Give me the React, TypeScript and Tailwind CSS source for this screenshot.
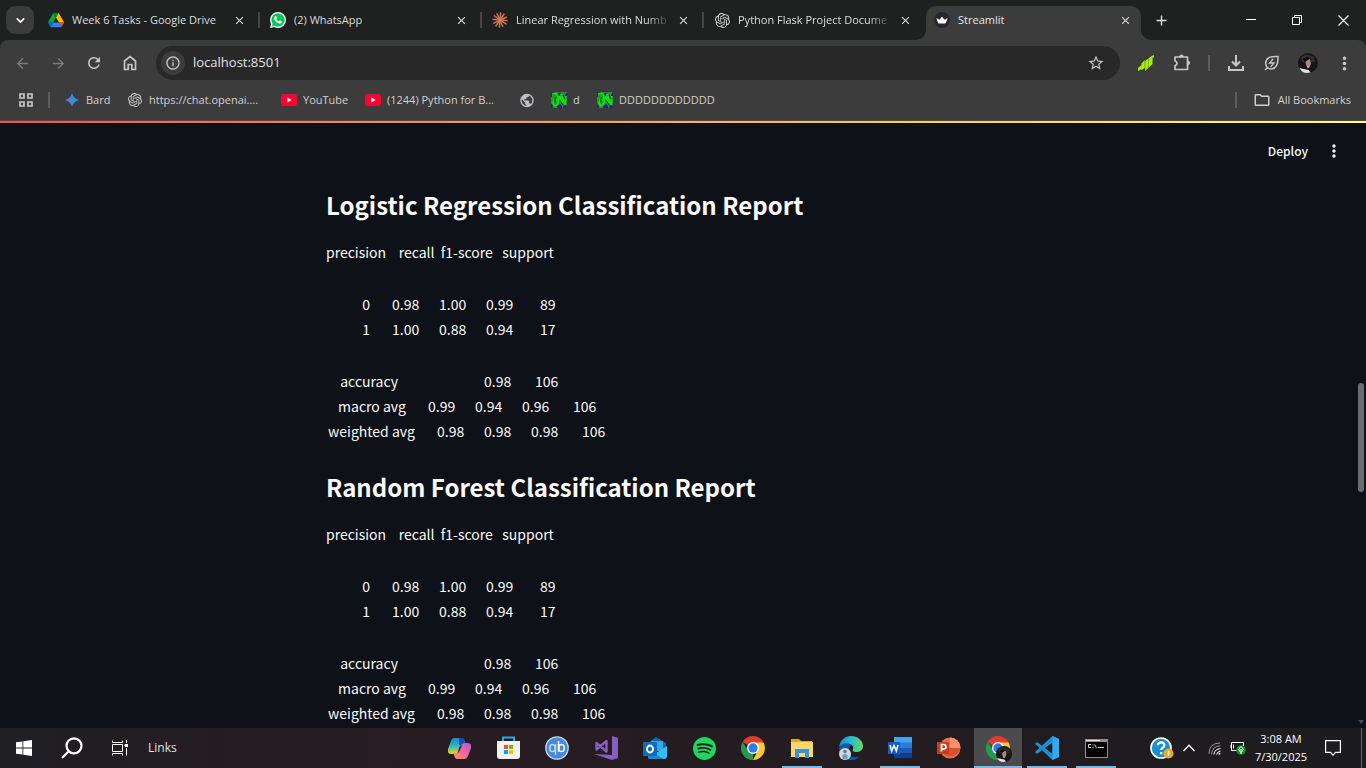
import React from "react";
import {
  MdArrowBack, MdArrowForward, MdRefresh, MdStarBorder, MdInfoOutline,
  MdMoreVert, MdPublic, MdClose, MdAdd, MdOutlineFolder,
} from "react-icons/md";
import { SiOpenai, SiSpotify } from "react-icons/si";
import { ChevronDown } from "lucide-react";

const UI = "font-['Open_Sans','Noto_Sans',sans-serif]";
const PAGE = "font-['Noto_Sans_CJK_SC','Noto_Sans',sans-serif]";

/* ---------- brand marks ---------- */

function DriveLogo() {
  return (
    <svg width="16" height="16" viewBox="0 0 87.3 87.3" aria-hidden="true">
      <path d="M6.6 71.4l3.85 6.65c.8 1.4 1.95 2.5 3.3 3.3L27.5 57.55H0c0 1.55.4 3.1 1.2 4.5z" fill="#0066da" />
      <path d="M43.65 29.6L29.9 5.8c-1.35.8-2.5 1.9-3.3 3.3L1.2 53.05A9 9 0 0 0 0 57.55h27.5z" fill="#00ac47" />
      <path d="M73.55 81.35c1.35-.8 2.5-1.9 3.3-3.3l1.6-2.75 7.65-13.25c.8-1.4 1.2-2.95 1.2-4.5H59.8l5.85 11.5z" fill="#ea4335" />
      <path d="M43.65 29.6L57.4 5.8c-1.35-.8-2.9-1.2-4.5-1.2H34.4c-1.6 0-3.15.45-4.5 1.2z" fill="#00832d" />
      <path d="M59.8 57.55H27.5L13.75 81.35c1.35.8 2.9 1.2 4.5 1.2h50.8c1.6 0 3.15-.45 4.5-1.2z" fill="#2684fc" />
      <path d="M73.4 31.1L60.7 9.1c-.8-1.4-1.95-2.5-3.3-3.3L43.65 29.6l16.15 28h27.45c0-1.55-.4-3.1-1.2-4.5z" fill="#ffba00" />
    </svg>
  );
}

function WhatsAppLogo() {
  return (
    <svg width="16" height="16" viewBox="0 0 16 16" aria-hidden="true">
      <path d="M8 0a8 8 0 0 1 0 16c-1.400 0-2.600-.3-3.800-1L0 16l1.100-4A8 8 0 0 1 8 0z" fill="#fff" />
      <path d="M8 1.300a6.700 6.700 0 1 1-3.500 12.400l-2.700.7.8-2.600A6.700 6.700 0 0 1 8 1.300z" fill="#06c755" />
      <path d="M5.400 4.200c.5-.3.8 0 1 .4l.5 1.200c.1.500-.6.9-.6 1.200.6 1.300 1.500 2 2.700 2.500.4 0 .7-.9 1.100-.9l1.500.8c.3.200.2.900-.1 1.300-.7.900-1.900 1-3 .6-2-.7-3.500-2.100-4.300-4-.4-1.200.2-2.500 1.200-3.100z" fill="#fff" />
    </svg>
  );
}

function ClaudeLogo() {
  const rays = [0, 28, 62, 90, 120, 148, 180, 212, 240, 270, 300, 332];
  return (
    <svg width="16" height="16" viewBox="0 0 16 16" aria-hidden="true">
      <g stroke="#d97757" strokeWidth="1.400" strokeLinecap="round">
        {rays.map((r) => <line key={r} x1="8" y1="8" x2="15" y2="8" transform={`rotate(${r + 5} 8 8)`} />)}
      </g>
    </svg>
  );
}

function StreamlitMark() {
  return (
    <svg width="16" height="16" viewBox="0 0 16 16" aria-hidden="true">
      <circle cx="8" cy="8" r="8" fill="#262730" />
      <path d="M2.300 6l3 1.700L8 4.800l2.700 2.900 3-1.700-1.900 5.200q-3.800.8-7.600 0z" fill="#fff" />
    </svg>
  );
}

function BardMark() {
  return (
    <svg width="14" height="14" viewBox="0 0 14 14" aria-hidden="true">
      <defs>
        <linearGradient id="bard" x1="0" x2="1">
          <stop offset="0" stopColor="#9168c0" /><stop offset=".45" stopColor="#4285d8" /><stop offset="1" stopColor="#1ba1e3" />
        </linearGradient>
      </defs>
      <path d="M7 0Q8.500 5.500 14 7Q8.500 8.500 7 14Q5.500 8.500 0 7Q5.500 5.500 7 0z" fill="url(#bard)" />
    </svg>
  );
}

function YouTubeMark() {
  return (
    <svg width="16" height="12" viewBox="0 0 16 12" aria-hidden="true">
      <rect width="16" height="12" rx="3" fill="#ff0033" />
      <path d="M6.300 3.500v5L10.600 6z" fill="#fff" />
    </svg>
  );
}

function GreenTile() {
  return (
    <svg width="16" height="16" viewBox="0 0 16 16" aria-hidden="true">
      <rect width="16" height="16" fill="#1d9a22" />
      <path d="M0 0h4v2H1v3H0zM9 0l2 4-2 1-2-3zM14 3l2-3v6l-1 2zM0 11l2 3v2H0zM6 14l3-2 2 2v2H6zM13 12l3 2v2h-4z" fill="#4b0aa0" />
      <path d="M1 2q5-2 6 3t-1 8q-3 2-4-2l2-6M8 4l3 7-1-9 4 11 1-9M3 8q2-2 3 1" fill="none" stroke="#14e010" strokeWidth="1.800" />
      <path d="M4 5v5M9 8l3 5M12 3l2 4" stroke="#073f20" strokeWidth="1" />
    </svg>
  );
}

function Avatar({ size }: { size: number }) {
  return (
    <svg width={size} height={size} viewBox="0 0 20 20" aria-hidden="true">
      <circle cx="10" cy="10" r="10" fill="#17131a" />
      <path d="M3 4q6-5 13 0l1 5H4z" fill="#352c30" />
      <path d="M7 7l5-1 1 5-2 4-3-3z" fill="#a58982" />
      <path d="M5 6q5-4 9 1l-3-1-4 3z" fill="#08070a" />
      <path d="M8.500 12.500l2.500 1-1 2z" fill="#e2cfc8" />
      <path d="M1.500 15l4 1 5 1 2 2.500q-8 2-11-4.500z" fill="#e6e2e3" />
    </svg>
  );
}

function ChromeLogo() {
  return (
    <svg width="24" height="24" viewBox="0 0 48 48" aria-hidden="true">
      <path d="M24 24L3.200 12A24 24 0 0 1 44.800 12z" fill="#e33b2e" />
      <path d="M24 13h21.200A24 24 0 0 1 24 48l9.500-18.500z" fill="#fcc934" />
      <path d="M3.200 12l11.300 17.500 10 5.500L24 48A24 24 0 0 1 3.200 12z" fill="#1e9e4a" />
      <circle cx="24" cy="24" r="12" fill="#fff" />
      <circle cx="24" cy="24" r="9.300" fill="#2f7bea" />
    </svg>
  );
}

/* ---------- browser ---------- */

type TabInfo = { title: string; icon: React.ReactNode; fade?: boolean };
const tabs: TabInfo[] = [
  { title: "Week 6 Tasks - Google Drive", icon: <DriveLogo /> },
  { title: "(2) WhatsApp", icon: <WhatsAppLogo /> },
  { title: "Linear Regression with Numb", icon: <ClaudeLogo />, fade: true },
  { title: "Python Flask Project Docume", icon: <SiOpenai size={15} color="#d5d5d5" />, fade: true },
];

function TabStrip() {
  return (
    <div className="flex h-10 items-stretch bg-[#1f2120] text-[#dcdcdc]">
      <div className="flex w-[38px] shrink-0 items-center pl-[6px]">
        <button aria-label="Search tabs" className="flex size-7 items-center justify-center rounded-[9px] bg-[#3c3c3c] text-white">
          <ChevronDown size={13} strokeWidth={3} />
        </button>
      </div>
      {tabs.map((t, i) => (
        <div key={t.title} className="relative flex w-[222px] min-w-0 items-center pl-[10px] pr-[13px]">
          <span className="flex w-4 shrink-0 justify-center">{t.icon}</span>
          <span className={`ml-2 flex-1 whitespace-nowrap text-[11px] ${t.fade ? "[mask-image:linear-gradient(to_right,black_82%,transparent_98%)]" : ""}`}>{t.title}</span>
          <button aria-label={`Close ${t.title}`} className="flex size-4 shrink-0 items-center justify-center"><MdClose size={13} /></button>
          {i < 3 && <span className="absolute right-0 top-3 h-4 w-[2px] bg-[#474747]" />}
        </div>
      ))}
      <div className="relative mt-[6px] flex w-[215px] min-w-0 items-center rounded-t-[10px] bg-[#3c3c3c] pb-[6px] pl-2 pr-2">
        <svg className="absolute -left-[10px] bottom-0" width="10" height="10" aria-hidden="true"><path d="M10 0v10H0A10 10 0 0 0 10 0z" fill="#3c3c3c" /></svg>
        <svg className="absolute -right-[10px] bottom-0" width="10" height="10" aria-hidden="true"><path d="M0 0v10h10A10 10 0 0 1 0 0z" fill="#3c3c3c" /></svg>
        <StreamlitMark />
        <span className="ml-2 flex-1 text-[11px] text-[#e6e6e6]">Streamlit</span>
        <button aria-label="Close Streamlit" className="flex size-4 items-center justify-center"><MdClose size={13} /></button>
      </div>
      <button aria-label="New tab" className="ml-[11px] flex w-[18px] items-center justify-center"><MdAdd size={17} /></button>
      <div className="ml-auto flex text-white">
        <button aria-label="Minimize" className="flex w-[46px] items-center justify-center"><svg width="10" height="10"><path d="M0 4.500h10" stroke="currentColor" /></svg></button>
        <button aria-label="Restore" className="flex w-[46px] items-center justify-center"><svg width="10" height="10" fill="none" stroke="currentColor"><path d="M.5 2.500h7v7h-7zM2.500 2.500v-2h7v7h-2" /></svg></button>
        <button aria-label="Close window" className="flex w-[46px] items-center justify-center"><svg width="11" height="11" stroke="currentColor" strokeWidth="1.200"><path d="M.5.5l10 10M10.500.5l-10 10" /></svg></button>
      </div>
    </div>
  );
}

function ToolButton({ label, children }: { label: string; children: React.ReactNode }) {
  return <button aria-label={label} className="flex h-9 w-9 shrink-0 items-center justify-center">{children}</button>;
}

function Toolbar() {
  return (
    <div className="flex h-[46px] items-center px-1 text-[#c7c7c7]">
      <span className="flex text-[#7b7b7b]">
        <ToolButton label="Back"><MdArrowBack size={17} /></ToolButton>
        <ToolButton label="Forward"><MdArrowForward size={17} /></ToolButton>
      </span>
      <ToolButton label="Reload"><MdRefresh size={18} /></ToolButton>
      <ToolButton label="Home">
        <svg width="14" height="16" viewBox="0 0 14 16" fill="none" stroke="currentColor" strokeWidth="1.700"><path d="M1.500 6L7 1.700 12.500 6v8.500H8.800V9.500H5.200v5H1.500z" /></svg>
      </ToolButton>
      <div className="ml-2 mr-2 flex h-[34px] min-w-0 flex-1 items-center rounded-full bg-[#282828] pl-[5px] pr-[15px]">
        <button aria-label="Site information" className="flex size-6 items-center justify-center rounded-full bg-[#3c3c3c]"><MdInfoOutline size={16} /></button>
        <input aria-label="Address" defaultValue="localhost:8501" className="ml-2 min-w-0 flex-1 bg-transparent text-[13px] text-[#e3e3e3] outline-none" />
        <button aria-label="Bookmark this tab"><MdStarBorder size={18} /></button>
      </div>
      <ToolButton label="Stock extension">
        <svg width="16" height="16" viewBox="0 0 16 16" fill="#a6ee00"><path d="M0 13l3.500-3v4L0 16zM3.500 8.500l3.300-3.500v8l-3.300 2zM7.200 6l3-2.500v9.500l-3 3zM10.500 3.500L13.500 1l2.500-1v2l-1.500 1v6l-4 4z" /></svg>
      </ToolButton>
      <ToolButton label="Extensions">
        <svg width="18" height="18" viewBox="0 0 18 18" fill="none" stroke="currentColor" strokeWidth="1.700" strokeLinejoin="round"><path d="M2 3h12.500v12.500H2v-4q2-.3 2-2.200T2 7z" /><path d="M7 2.500q1.500-2.500 3 0zM15 7.500q2.500 1.500 0 3z" fill="currentColor" /></svg>
      </ToolButton>
      <span className="mx-2 h-4 w-[2px] bg-[#5c5c5c]" />
      <ToolButton label="Downloads">
        <svg width="16" height="16" viewBox="0 0 16 16" fill="none" stroke="currentColor" strokeWidth="2"><path d="M8 0v10M4 6.500l4 4 4-4M1 11v4h14v-4" /></svg>
      </ToolButton>
      <ToolButton label="Energy saver">
        <svg width="16" height="16" viewBox="0 0 16 16" fill="none" stroke="currentColor" strokeWidth="1.500"><path d="M14 1.500Q2 .5 1.700 8q0 6 6 6Q14.500 13 14 1.500zM1 15l2.500-2.500" /><path d="M9 4L5.500 8H10l-3.500 4" strokeWidth="1.300" /></svg>
      </ToolButton>
      <ToolButton label="Profile"><Avatar size={20} /></ToolButton>
      <ToolButton label="Menu"><MdMoreVert size={21} /></ToolButton>
    </div>
  );
}

function Bookmark({ icon, text, className }: { icon: React.ReactNode; text?: string; className: string }) {
  return (
    <a href="#" aria-label={text ?? "Website"} className={`flex shrink-0 items-center whitespace-nowrap text-[11px] ${className}`}>
      <span className="flex w-4 shrink-0 justify-center">{icon}</span>
      {text && <span className="ml-[6px]">{text}</span>}
    </a>
  );
}

function Bookmarks() {
  return (
    <nav aria-label="Bookmarks" className="flex h-[35px] items-center border-b border-[#4a4a4a] pb-[6px] pl-[19px] pr-[15px] text-[#d0d0d0]">
      <button aria-label="Apps">
        <svg width="14" height="14" fill="none" stroke="#c7c7c7" strokeWidth="1.700"><path d="M1 1h4v4H1zM9 1h4v4H9zM1 9h4v4H1zM9 9h4v4H9z" /></svg>
      </button>
      <span className="ml-[15px] h-4 w-[2px] bg-[#5c5c5c]" />
      <Bookmark icon={<BardMark />} text="Bard" className="ml-[14px] w-[63px]" />
      <Bookmark icon={<SiOpenai size={14} />} text="https://chat.openai...." className="w-[154px]" />
      <Bookmark icon={<YouTubeMark />} text="YouTube" className="w-[84px]" />
      <Bookmark icon={<YouTubeMark />} text="(1244) Python for B..." className="w-[154px]" />
      <Bookmark icon={<MdPublic size={17} color="#bdc1c6" />} className="w-8" />
      <Bookmark icon={<GreenTile />} text="d" className="w-[46px]" />
      <Bookmark icon={<GreenTile />} text="DDDDDDDDDDDD" className="" />
      <span className="ml-auto mr-4 h-4 w-[2px] bg-[#5c5c5c]" />
      <button className="flex items-center whitespace-nowrap text-[11px]"><MdOutlineFolder size={18} className="mr-[7px]" />All Bookmarks</button>
    </nav>
  );
}

/* ---------- page ---------- */

type Row = { label: string; labelClass: string; cells: string[] };
const groups: Row[][] = [
  [
    { label: "0", labelClass: "w-11 mr-[22px]", cells: ["0.98", "1.00", "0.99", "89"] },
    { label: "1", labelClass: "w-11 mr-[22px]", cells: ["1.00", "0.88", "0.94", "17"] },
  ],
  [
    { label: "accuracy", labelClass: "w-[72px] mr-[86px]", cells: ["0.98", "106"] },
    { label: "macro avg", labelClass: "w-20 mr-[22px]", cells: ["0.99", "0.94", "0.96", "106"] },
    { label: "weighted avg", labelClass: "w-[89px] mr-[22px]", cells: ["0.98", "0.98", "0.98", "106"] },
  ],
];

function Report({ title }: { title: string }) {
  return (
    <section className="mb-[26px]">
      <h2 className="mb-[18px] whitespace-nowrap text-[24px] font-bold leading-[34px]">{title}</h2>
      <div className="flex flex-col gap-[27px] whitespace-nowrap text-[14px] leading-[25px]">
        <p className="whitespace-pre">{"precision    recall  f1-score   support"}</p>
        {groups.map((rows, g) => (
          <div key={g}>
            {rows.map((r) => (
              <div key={r.label} className="flex">
                <span className={`text-right ${r.labelClass}`}>{r.label}</span>
                <span className="flex gap-[19px]">
                  {r.cells.map((c, i) => (
                    <span key={i} className={c.length === 4 ? "w-7" : c.length === 2 ? "pl-[7px]" : "pl-1"}>{c}</span>
                  ))}
                </span>
              </div>
            ))}
          </div>
        ))}
      </div>
    </section>
  );
}

function Page() {
  return (
    <div className={`flex min-h-0 flex-1 flex-col bg-[#0e1117] text-[#fafafa] ${PAGE}`}>
      <div className="h-[2px] shrink-0 bg-linear-to-r from-[#ff4b4b] to-[#fffd80]" />
      <div className="flex min-h-0 flex-1">
        <main className="min-w-0 flex-1 overflow-hidden">
          <header className="flex h-[55px] items-center justify-end pr-[6px]">
            <button className="mr-[10px] text-[12px] font-medium">Deploy</button>
            <button aria-label="App menu" className="flex size-8 items-center justify-center"><MdMoreVert size={20} /></button>
          </header>
          <div className="mx-auto max-w-[736px] px-4 pt-[10px]">
            <Report title="Logistic Regression Classification Report" />
            <Report title="Random Forest Classification Report" />
          </div>
        </main>
        <div className="relative w-[10px] shrink-0">
          <div className="absolute left-[2px] top-[43%] h-[18%] w-[6px] rounded-full bg-[#6b6c70]" />
          <svg className="absolute bottom-1 left-[2px]" width="6" height="4" aria-hidden="true"><path d="M0 0h6L3 4z" fill="#4a4b50" /></svg>
        </div>
      </div>
    </div>
  );
}

/* ---------- taskbar ---------- */

const apps: { name: string; icon: React.ReactNode; open?: boolean; active?: boolean }[] = [
  {
    name: "Copilot",
    icon: (
      <svg width="23" height="21" viewBox="0 0 23 21">
        <defs>
          <linearGradient id="cpa" x1="0" y1="0" x2="0" y2="1"><stop offset="0" stopColor="#1688dc" /><stop offset=".5" stopColor="#2fb7b0" /><stop offset="1" stopColor="#f5d32c" /></linearGradient>
          <linearGradient id="cpb" x1="1" y1="0" x2="0" y2="1"><stop offset="0" stopColor="#b25be8" /><stop offset=".5" stopColor="#f2659d" /><stop offset="1" stopColor="#ff9a4c" /></linearGradient>
        </defs>
        <path d="M6 0h8q2 0 3 4l1 3h-4q-2 0-3 3l-1 4q-1 2-3 2H3q-4 0-3-5L3 3q1-3 3-3z" fill="url(#cpa)" />
        <path d="M17 5h3q4 0 3 5l-3 8q-1 3-3 3H9q-2 0-3-4l-1-2h4q2 0 3-3l2-5q1-2 3-2z" fill="url(#cpb)" />
        <path d="M11 0h3q2 0 3 5-3 0-4 3l-2-2z" fill="#164ec0" />
      </svg>
    ),
  },
  {
    name: "Microsoft Store",
    icon: (
      <svg width="23" height="24" viewBox="0 0 23 24">
        <path d="M6 6V1.500h11V6" fill="none" stroke="#25a8e8" strokeWidth="2" />
        <path d="M0 5h23v15q0 3-3 3H3q-3 0-3-3z" fill="#f2f2f2" />
        <path d="M7 9h4v4H7z" fill="#f25022" /><path d="M12 9h4v4h-4z" fill="#7fba00" />
        <path d="M7 14h4v4H7z" fill="#00a4ef" /><path d="M12 14h4v4h-4z" fill="#ffb900" />
      </svg>
    ),
  },
  {
    name: "qBittorrent",
    icon: (
      <svg width="24" height="24" viewBox="0 0 24 24" fill="none">
        <circle cx="12" cy="12" r="11.200" fill="#4a88d4" stroke="#b9d4f2" strokeWidth="1.300" />
        <g strokeWidth="1.500"><g stroke="#b9e0fa"><ellipse cx="7.500" cy="12" rx="2.700" ry="3.600" /><path d="M10.500 8.300v10.500" /></g><g stroke="#fff"><ellipse cx="16.500" cy="12" rx="2.700" ry="3.600" /><path d="M13.500 5v10.800" /></g></g>
      </svg>
    ),
  },
  {
    name: "Visual Studio",
    icon: (
      <svg width="24" height="24" viewBox="0 0 24 24">
        <path d="M18 0l6 2v20l-6 2L0 18l18 1z" fill="#865fc5" />
        <path d="M2.500 7v6.500l10-8.500v10.500z" fill="none" stroke="#865fc5" strokeWidth="2.400" strokeLinejoin="round" />
      </svg>
    ),
  },
  {
    name: "Outlook",
    icon: (
      <svg width="24" height="22" viewBox="0 0 24 22">
        <path d="M5 6l8-6 10 6v6H5z" fill="#1268b5" />
        <path d="M8 4h12v10H8z" fill="#35a6e6" />
        <path d="M5 21L24 9v10q0 3-3 3H7q-2 0-2-2z" fill="#2ec0f2" /><path d="M5 13l16 9H7q-2 0-2-2z" fill="#1489d8" />
        <path d="M0 5h14v14H0z" fill="#0f6cbd" />
        <ellipse cx="7" cy="12" rx="3" ry="3.500" fill="none" stroke="#fff" strokeWidth="1.900" />
      </svg>
    ),
  },
  { name: "Spotify", icon: <SiSpotify size={23} color="#1ed760" /> },
  { name: "Chrome", icon: <ChromeLogo /> },
  {
    name: "File Explorer",
    open: true,
    icon: (
      <svg width="22" height="19" viewBox="0 0 22 19">
        <path d="M0 0h8l2 2h11v4H0z" fill="#e3a51c" /><path d="M0 3h22v15H0z" fill="#fbd769" />
        <path d="M4 19v-9h14v9h-4v-5H8v5z" fill="#3793dd" />
      </svg>
    ),
  },
  {
    name: "Edge",
    icon: (
      <svg width="24" height="24" viewBox="0 0 24 24">
        <defs><linearGradient id="edge" x1="0" x2="1" y1=".4" y2=".5"><stop offset="0" stopColor="#1687d4" /><stop offset=".5" stopColor="#2bbdcd" /><stop offset="1" stopColor="#64dc53" /></linearGradient></defs>
        <path d="M0 12a12 12 0 0 0 20 9q-10 2-10-7 0-5 4-6L5 5z" fill="#1259a5" />
        <path d="M0 11C1 4 6 0 12 0c7 0 12 5 12 10 0 4-3 6-7 6-3 0-4-1-3-3 2-5-8-9-14-2z" fill="url(#edge)" />
        <circle cx="6" cy="18" r="6" fill="#d2d7dc" /><circle cx="6" cy="15.500" r="1.800" fill="#6b7885" /><path d="M3.500 23v-4q2.500-2 5 0v4z" fill="#6f9bc2" />
      </svg>
    ),
  },
  {
    name: "Word",
    open: true,
    icon: (
      <svg width="24" height="22" viewBox="0 0 24 22">
        <path d="M6 0h18v6H6z" fill="#41a5ee" /><path d="M6 5.500h18V11H6z" fill="#2b7cd3" /><path d="M6 11h18v5.500H6z" fill="#185abd" /><path d="M6 16.500h18V21H6z" fill="#103f91" />
        <path d="M0 5h12v12H0z" fill="#185abd" /><path d="M2 8l1.700 6L6 8.500 8.300 14 10 8" fill="none" stroke="#fff" strokeWidth="1.500" />
      </svg>
    ),
  },
  {
    name: "PowerPoint",
    icon: (
      <svg width="24" height="22" viewBox="0 0 24 22">
        <circle cx="13" cy="11" r="10.500" fill="#ed6c47" /><path d="M13 .5A10.500 10.500 0 0 1 23.500 11H13z" fill="#ff8f6b" /><path d="M3 11h20.500a10.500 10.500 0 0 1-20.500 0z" fill="#d35230" />
        <path d="M0 5h12v12H0z" fill="#c43e1c" /><path d="M4.500 14.500v-7h2.300q2.200.2 2.200 2.200t-2.200 2.100H4.500" fill="none" stroke="#fff" strokeWidth="1.700" />
      </svg>
    ),
  },
  {
    name: "Chrome profile",
    open: true,
    active: true,
    icon: <span className="relative"><ChromeLogo /><span className="absolute -bottom-[2px] -right-[2px]"><Avatar size={16} /></span></span>,
  },
  {
    name: "Visual Studio Code",
    open: true,
    icon: (
      <svg width="24" height="24" viewBox="0 0 24 24">
        <path d="M17.500 0L24 3v18l-6.500 3L2 9.500 0 8l2-2 15.500 12V6.500L2 18l-2-2z" fill="#1d8fd8" />
        <path d="M17.500 0L24 3v18l-6.500 3z" fill="#35a9ee" />
      </svg>
    ),
  },
  {
    name: "Command Prompt",
    open: true,
    icon: (
      <svg width="23" height="19" viewBox="0 0 23 19">
        <path d="M0 0h23v19H0z" fill="#8f8f8f" /><path d="M1 3h21v15H1z" fill="#050505" /><path d="M1 1h14v1H1z" fill="#e8e8e8" />
        <path d="M6 5.500H3.500v3H6M8 5.500v1M8 8v1M9.500 5.500l2 3.500M13 8.500h6" fill="none" stroke="#d5d5d5" />
      </svg>
    ),
  },
];

function Taskbar() {
  return (
    <footer className="flex h-10 shrink-0 items-stretch bg-linear-to-r from-[#1f1f24] via-[#281c22] via-33% to-[#1c1c1f] text-white">
      <div className="flex flex-1 items-stretch">
        <button aria-label="Start" className="flex w-12 items-center justify-center">
          <svg width="16" height="16" fill="#fff"><path d="M0 2.300L6.500 1.400v6.200H0zM7.300 1.300L16 0v7.600H7.300zM0 8.400h6.500v6.200L0 13.700zM7.300 8.400H16V16l-8.700-1.300z" /></svg>
        </button>
        <button aria-label="Search" className="flex w-12 items-center justify-center">
          <svg width="22" height="22" fill="none" stroke="#fff" strokeWidth="2.200"><circle cx="13" cy="8.800" r="7.500" /><path d="M7.500 14.500L1 21" /></svg>
        </button>
        <button aria-label="Task view" className="flex w-12 items-center justify-center">
          <svg width="16" height="16" fill="none" stroke="#fff"><path d="M.5.500v2h10v-2M.5 4.500h10v7H.5zM.5 15.500v-2h10v2M14.500 0v3M14.500 8v7.500" /><path d="M13 4.500h3v2h-3z" fill="#fff" /></svg>
        </button>
        <button className="px-1 text-[12px] text-[#e0e0e0]">Links</button>
      </div>
      <div className="flex shrink-0 gap-px">
        {apps.map((a) => (
          <button key={a.name} aria-label={a.name} className={`relative flex w-12 items-center justify-center ${a.active ? "bg-[#4b4a4c]" : ""}`}>
            {a.icon}
            {a.open && <span className={`absolute bottom-0 h-[2px] bg-[#76b9ed] ${a.active ? "inset-x-0" : "inset-x-1"}`} />}
          </button>
        ))}
      </div>
      <div className="flex min-w-[246px] flex-none items-center">
        <button aria-label="Help" className="ml-[30px]">
          <svg width="24" height="22" viewBox="0 0 24 22"><circle cx="11" cy="11" r="10" fill="#1690d0" stroke="#fff" strokeWidth="1.700" /><path d="M7.800 8.300q.2-3 3.300-3t3.300 2.700q0 1.700-1.700 2.700-1.500.8-1.500 2.300M11.200 15v2.200" fill="none" stroke="#fff" strokeWidth="2.200" /><circle cx="18.500" cy="16.500" r="5" fill="#f0a81c" /><path d="M18.500 14v5" stroke="#fff" strokeWidth="1.500" /></svg>
        </button>
        <button aria-label="Show hidden icons" className="ml-[9px]"><svg width="12" height="8" fill="none" stroke="#fff" strokeWidth="1.300"><path d="M.5 7L6 1.300 11.500 7" /></svg></button>
        <button aria-label="Network" className="ml-[13px]">
          <svg width="13" height="13" viewBox="0 0 13 13" fill="none"><g stroke="#999"><path d="M1 12Q1 1 12 1M3.500 12.500Q4 4 12.500 3.800" /></g><g stroke="#fff"><path d="M6 12.500q.3-5.500 6.500-5.800M8.700 12.500q.3-3 3.800-3.200" /></g><circle cx="11.500" cy="11.800" r="1" fill="#fff" /></svg>
        </button>
        <button aria-label="Battery" className="ml-[9px]">
          <svg width="16" height="13" viewBox="0 0 16 13"><path d="M1.500.5h12v8h-12zM0 3v3M3.500 2.500v4" fill="none" stroke="#fff" /><circle cx="11" cy="8" r="4.800" fill="#0f8f23" /><path d="M11 4.500q4 3 0 6-4-3 0-6zM11 7v5" stroke="#fff" fill="none" /></svg>
        </button>
        <button className="ml-2 w-[54px] whitespace-nowrap text-center text-[11px] leading-[18px]">3:08 AM<br />7/30/2025</button>
        <button aria-label="Notifications" className="ml-[17px]"><svg width="16" height="16" fill="none" stroke="#fff" strokeWidth="1.200"><path d="M.6.6h14.800v11.800H10.500L8 15.200l-2.500-2.800H.6z" /></svg></button>
        <span className="ml-auto mr-1 h-10 w-px bg-[#626264]" />
      </div>
    </footer>
  );
}

export default function App() {
  return (
    <div className={`flex h-screen flex-col overflow-hidden bg-[#0e1117] ${UI}`}>
      <div className="shrink-0 bg-[#1f2120]">
        <TabStrip />
        <div className="rounded-t-[8px] bg-[#3c3c3c]">
          <Toolbar />
          <Bookmarks />
        </div>
      </div>
      <Page />
      <Taskbar />
    </div>
  );
}
